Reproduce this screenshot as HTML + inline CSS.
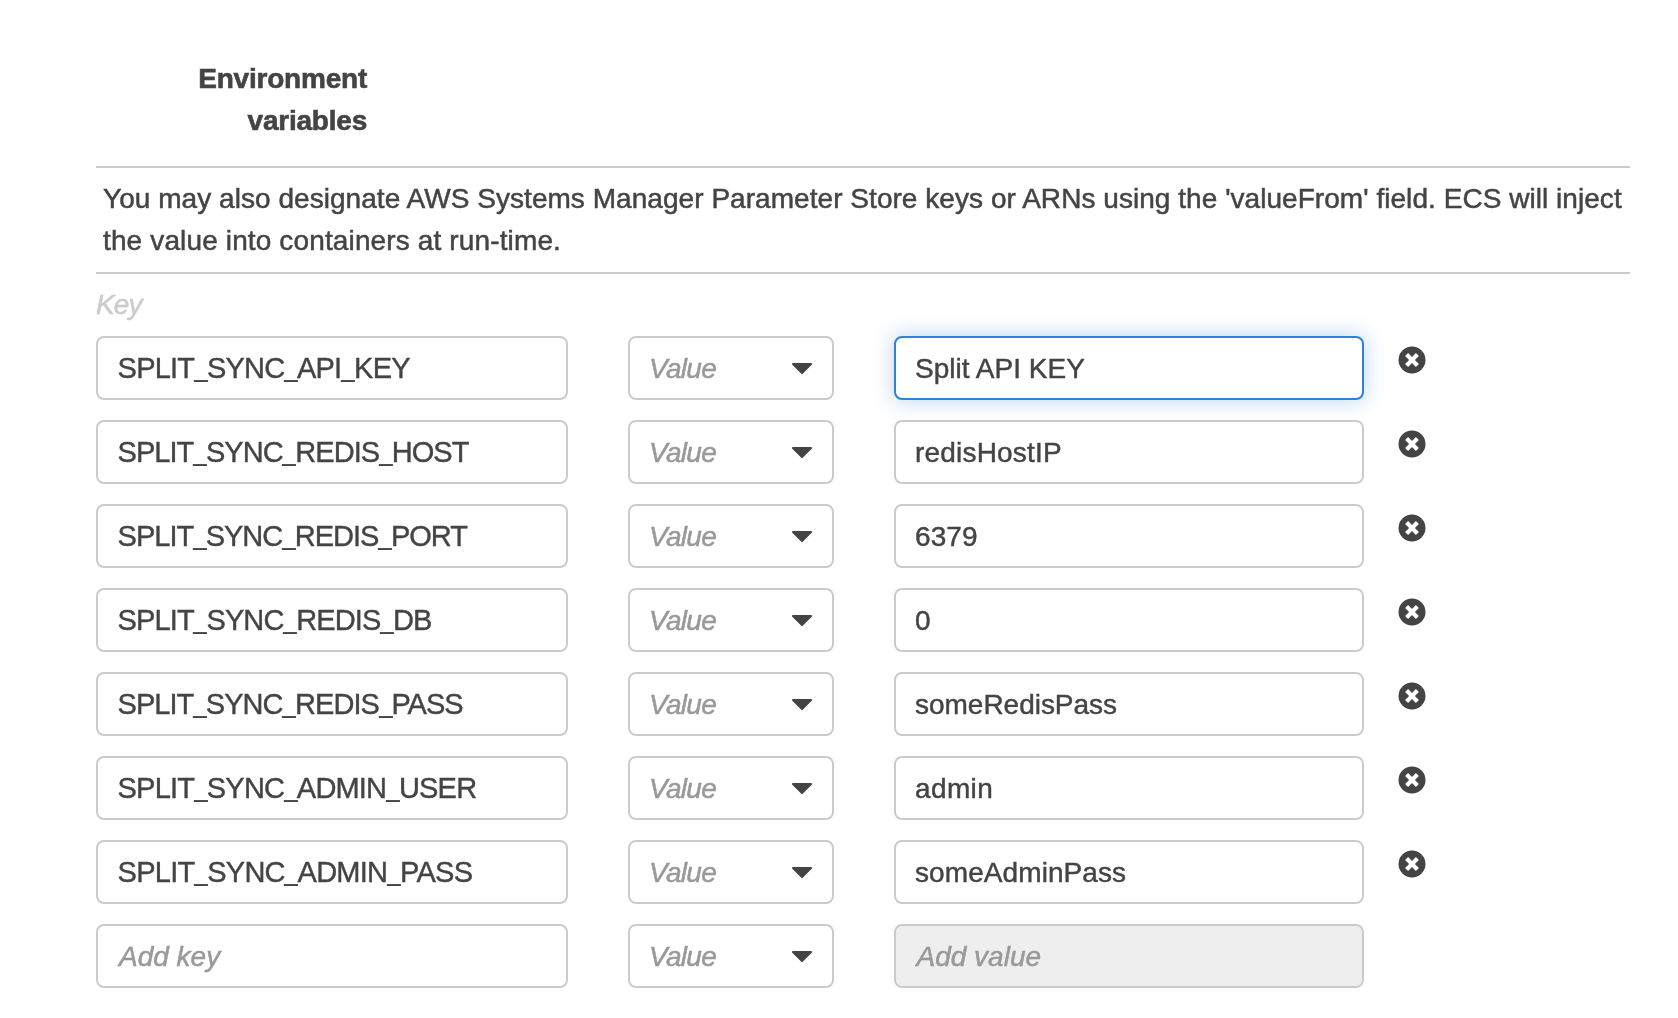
<!DOCTYPE html>
<html><head><meta charset="utf-8">
<style>
html,body{margin:0;padding:0;background:#fff;width:1678px;height:1018px;overflow:hidden;position:relative;}
body{font-family:"Liberation Sans",sans-serif;color:#444;}
.box,.abs{will-change:transform;-webkit-text-stroke:0.5px currentColor;}
.abs{position:absolute;}
.hdr{left:0;width:367px;text-align:right;font-weight:bold;font-size:28px;line-height:42px;top:58px;white-space:nowrap;letter-spacing:-0.22px;-webkit-text-stroke:0.6px currentColor;}
.hr{left:96px;width:1534px;height:2px;background:#cbcbcb;}
.desc{left:103px;top:178px;font-size:28px;line-height:42px;white-space:nowrap;}
.keylbl{left:96px;top:284px;letter-spacing:-0.9px;font-size:28px;line-height:42px;font-style:italic;color:#ccc;}
.box{position:absolute;box-sizing:border-box;height:64px;border:2px solid #cbcbcb;border-radius:8px;background:#fff;font-size:28px;line-height:60px;white-space:nowrap;overflow:hidden;}
.k{left:96px;width:472px;}
.k .t{font-size:29px;-webkit-text-stroke:0.4px currentColor;}
.v .t{-webkit-text-stroke:0.45px currentColor;}
.u{display:inline-block;transform:translateY(-2px) scaleX(0.83);margin:0 -1.3px;-webkit-text-stroke:0.1px currentColor;}
.k.ph{padding-left:21px;padding-top:1px;}
.s{left:628px;width:206px;padding-left:19px;padding-top:1px;font-style:italic;color:#999;letter-spacing:-0.7px;}
.v{left:894px;width:470px;padding-top:1px;}
.v.ph{padding-left:20.5px;}
.ph{font-style:italic;color:#999;}
.dis{background:#eee;}
.focus{border-color:#2c81dc;box-shadow:0 0 20px 2px rgba(42,127,219,0.28);}
.tri{position:absolute;left:162px;top:25px;width:22px;height:14px;}
.x{position:absolute;left:1398px;width:28px;height:28px;}
</style></head><body>
<div class="abs hdr">Environment<br>variables</div>
<div class="abs hr" style="top:166px"></div>
<div class="abs desc"><span style="letter-spacing:0.045px">You may also designate AWS Systems Manager Parameter Store keys or ARNs using the 'valueFrom' field. ECS will inject</span><br><span style="letter-spacing:0.135px">the value into containers at run-time.</span></div>
<div class="abs hr" style="top:272px"></div>
<div class="abs keylbl">Key</div>
<div class="box k" style="top:336px;padding-left:19.6px"><span class="t" style="letter-spacing:-0.801px">SPLIT<span class="u">_</span>SYNC<span class="u">_</span>API<span class="u">_</span>KEY</span></div>
<div class="box s" style="top:336px">Value<svg class="tri" viewBox="0 0 22 14"><path d="M1 1H19L10 10Z" fill="#444" stroke="#444" stroke-width="2" stroke-linejoin="round"/></svg></div>
<div class="box v focus" style="top:336px;padding-left:19px"><span class="t" style="letter-spacing:0.025px">Split API KEY</span></div>
<svg class="x" style="top:346px" viewBox="0 0 28 28"><circle cx="14" cy="14" r="13.5" fill="#444"/><path d="M8.6 8.6L19.4 19.4M19.4 8.6L8.6 19.4" stroke="#fff" stroke-width="4.2"/></svg>
<div class="box k" style="top:420px;padding-left:19.6px"><span class="t" style="letter-spacing:-0.960px">SPLIT<span class="u">_</span>SYNC<span class="u">_</span>REDIS<span class="u">_</span>HOST</span></div>
<div class="box s" style="top:420px">Value<svg class="tri" viewBox="0 0 22 14"><path d="M1 1H19L10 10Z" fill="#444" stroke="#444" stroke-width="2" stroke-linejoin="round"/></svg></div>
<div class="box v" style="top:420px;padding-left:19px"><span class="t" style="letter-spacing:0.190px">redisHostIP</span></div>
<svg class="x" style="top:430px" viewBox="0 0 28 28"><circle cx="14" cy="14" r="13.5" fill="#444"/><path d="M8.6 8.6L19.4 19.4M19.4 8.6L8.6 19.4" stroke="#fff" stroke-width="4.2"/></svg>
<div class="box k" style="top:504px;padding-left:19.6px"><span class="t" style="letter-spacing:-1.005px">SPLIT<span class="u">_</span>SYNC<span class="u">_</span>REDIS<span class="u">_</span>PORT</span></div>
<div class="box s" style="top:504px">Value<svg class="tri" viewBox="0 0 22 14"><path d="M1 1H19L10 10Z" fill="#444" stroke="#444" stroke-width="2" stroke-linejoin="round"/></svg></div>
<div class="box v" style="top:504px;padding-left:19px"><span class="t" style="letter-spacing:0.100px">6379</span></div>
<svg class="x" style="top:514px" viewBox="0 0 28 28"><circle cx="14" cy="14" r="13.5" fill="#444"/><path d="M8.6 8.6L19.4 19.4M19.4 8.6L8.6 19.4" stroke="#fff" stroke-width="4.2"/></svg>
<div class="box k" style="top:588px;padding-left:19.6px"><span class="t" style="letter-spacing:-0.880px">SPLIT<span class="u">_</span>SYNC<span class="u">_</span>REDIS<span class="u">_</span>DB</span></div>
<div class="box s" style="top:588px">Value<svg class="tri" viewBox="0 0 22 14"><path d="M1 1H19L10 10Z" fill="#444" stroke="#444" stroke-width="2" stroke-linejoin="round"/></svg></div>
<div class="box v" style="top:588px;padding-left:19px"><span class="t" style="letter-spacing:0.100px">0</span></div>
<svg class="x" style="top:598px" viewBox="0 0 28 28"><circle cx="14" cy="14" r="13.5" fill="#444"/><path d="M8.6 8.6L19.4 19.4M19.4 8.6L8.6 19.4" stroke="#fff" stroke-width="4.2"/></svg>
<div class="box k" style="top:672px;padding-left:19.6px"><span class="t" style="letter-spacing:-0.978px">SPLIT<span class="u">_</span>SYNC<span class="u">_</span>REDIS<span class="u">_</span>PASS</span></div>
<div class="box s" style="top:672px">Value<svg class="tri" viewBox="0 0 22 14"><path d="M1 1H19L10 10Z" fill="#444" stroke="#444" stroke-width="2" stroke-linejoin="round"/></svg></div>
<div class="box v" style="top:672px;padding-left:19px"><span class="t" style="letter-spacing:-0.020px">someRedisPass</span></div>
<svg class="x" style="top:682px" viewBox="0 0 28 28"><circle cx="14" cy="14" r="13.5" fill="#444"/><path d="M8.6 8.6L19.4 19.4M19.4 8.6L8.6 19.4" stroke="#fff" stroke-width="4.2"/></svg>
<div class="box k" style="top:756px;padding-left:19.6px"><span class="t" style="letter-spacing:-0.816px">SPLIT<span class="u">_</span>SYNC<span class="u">_</span>ADMIN<span class="u">_</span>USER</span></div>
<div class="box s" style="top:756px">Value<svg class="tri" viewBox="0 0 22 14"><path d="M1 1H19L10 10Z" fill="#444" stroke="#444" stroke-width="2" stroke-linejoin="round"/></svg></div>
<div class="box v" style="top:756px;padding-left:19px"><span class="t" style="letter-spacing:0.370px">admin</span></div>
<svg class="x" style="top:766px" viewBox="0 0 28 28"><circle cx="14" cy="14" r="13.5" fill="#444"/><path d="M8.6 8.6L19.4 19.4M19.4 8.6L8.6 19.4" stroke="#fff" stroke-width="4.2"/></svg>
<div class="box k" style="top:840px;padding-left:19.6px"><span class="t" style="letter-spacing:-0.753px">SPLIT<span class="u">_</span>SYNC<span class="u">_</span>ADMIN<span class="u">_</span>PASS</span></div>
<div class="box s" style="top:840px">Value<svg class="tri" viewBox="0 0 22 14"><path d="M1 1H19L10 10Z" fill="#444" stroke="#444" stroke-width="2" stroke-linejoin="round"/></svg></div>
<div class="box v" style="top:840px;padding-left:19px"><span class="t" style="letter-spacing:0.085px">someAdminPass</span></div>
<svg class="x" style="top:850px" viewBox="0 0 28 28"><circle cx="14" cy="14" r="13.5" fill="#444"/><path d="M8.6 8.6L19.4 19.4M19.4 8.6L8.6 19.4" stroke="#fff" stroke-width="4.2"/></svg>
<div class="box k ph" style="top:924px">Add key</div>
<div class="box s" style="top:924px">Value<svg class="tri" viewBox="0 0 22 14"><path d="M1 1H19L10 10Z" fill="#444" stroke="#444" stroke-width="2" stroke-linejoin="round"/></svg></div>
<div class="box v ph dis" style="top:924px">Add value</div>
</body></html>
